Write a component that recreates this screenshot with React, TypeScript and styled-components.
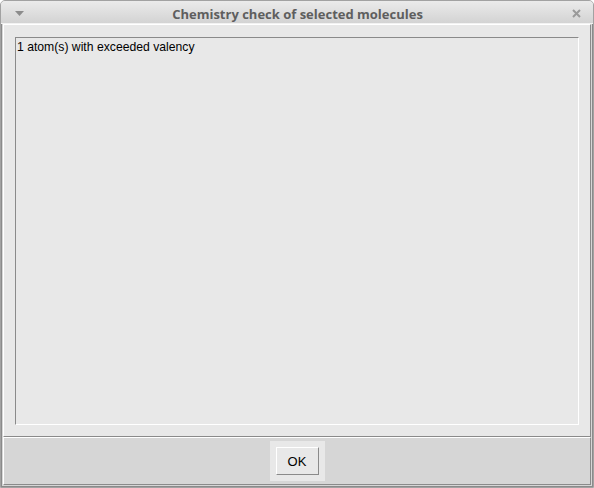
import React from "react";
import styled, { createGlobalStyle } from "styled-components";

const Global = createGlobalStyle`
  html, body { margin: 0; padding: 0; background: #ffffff; }
  * { box-sizing: border-box; }
`;

const Window = styled.div`
  width: 594px;
  height: 488px;
  border: 1px solid #a2a2a2;
  border-radius: 5px 5px 0 0;
  overflow: hidden;
  display: flex;
  flex-direction: column;
  background: #d4d4d4;
`;

const TitleBar = styled.div`
  height: 23px;
  flex: none;
  display: flex;
  align-items: center;
  padding: 0 12px 0 13px;
  background: linear-gradient(#ebebeb, #d3d3d3);
  border-bottom: 1px solid #f2f2f2;
`;

const Title = styled.div`
  flex: 1;
  text-align: center;
  font-family: "Open Sans", "DejaVu Sans", sans-serif;
  font-weight: 700;
  font-size: 13px;
  color: #5e5e5e;
  line-height: 22px;
  padding-top: 3px;
`;

const IconSlot = styled.div`
  width: 10px;
  height: 10px;
  margin-top: 2px;
  display: flex;
  align-items: center;
  justify-content: center;
`;

const Frame = styled.div`
  flex: 1;
  display: flex;
  flex-direction: column;
  border: 1px solid #8a8a8a;
  border-top: none;
  padding: 0 1px 1px 1px;
  background: #d6d6d6;
`;

const ContentPanel = styled.div`
  flex: 1;
  display: flex;
  background: #e8e8e8;
  border-top: 1px solid #ffffff;
  border-left: 1px solid #ffffff;
  border-right: 1px solid #8a8a8a;
  border-bottom: 1px solid #8a8a8a;
  padding: 12px 11px 11px 11px;
`;

const TextArea = styled.div`
  flex: 1;
  background: #e8e8e8;
  border-top: 1px solid #8a8a8a;
  border-left: 1px solid #8a8a8a;
  border-right: 1px solid #ffffff;
  border-bottom: 1px solid #ffffff;
  padding: 2px 1px;
  font-family: "Liberation Sans", Arial, sans-serif;
  font-size: 12.2px;
  line-height: 15px;
  color: #000000;
`;

const ButtonBar = styled.div`
  height: 48px;
  flex: none;
  display: flex;
  align-items: center;
  justify-content: center;
  background: #d6d6d6;
  border-top: 1px solid #ffffff;
  border-left: 1px solid #ffffff;
  border-right: 1px solid #8a8a8a;
  border-bottom: 1px solid #8a8a8a;
`;

const FocusBox = styled.div`
  padding: 6px;
  background: #e8e8e8;
  display: flex;
`;

const Button = styled.button`
  width: 43px;
  height: 28px;
  margin: 0;
  padding: 0;
  background: #e8e8e8;
  border-top: 1px solid #ffffff;
  border-left: 1px solid #ffffff;
  border-right: 1px solid #8a8a8a;
  border-bottom: 1px solid #8a8a8a;
  font-family: "Liberation Sans", Arial, sans-serif;
  font-size: 13px;
  color: #000000;
  cursor: pointer;
`;

export default function App() {
  return (
    <>
      <Global />
      <Window>
        <TitleBar>
          <IconSlot>
            <svg width="9" height="5" viewBox="0 0 9 5">
              <polygon points="0,0 9,0 4.5,5" fill="#8c8c8c" />
            </svg>
          </IconSlot>
          <Title>Chemistry check of selected molecules</Title>
          <IconSlot>
            <svg width="9" height="9" viewBox="0 0 9 9">
              <path d="M1 1 L8 8 M8 1 L1 8" stroke="#9a9a9a" strokeWidth="2" />
            </svg>
          </IconSlot>
        </TitleBar>
        <Frame>
          <ContentPanel>
            <TextArea>1 atom(s) with exceeded valency</TextArea>
          </ContentPanel>
          <ButtonBar>
            <FocusBox>
              <Button>OK</Button>
            </FocusBox>
          </ButtonBar>
        </Frame>
      </Window>
    </>
  );
}
